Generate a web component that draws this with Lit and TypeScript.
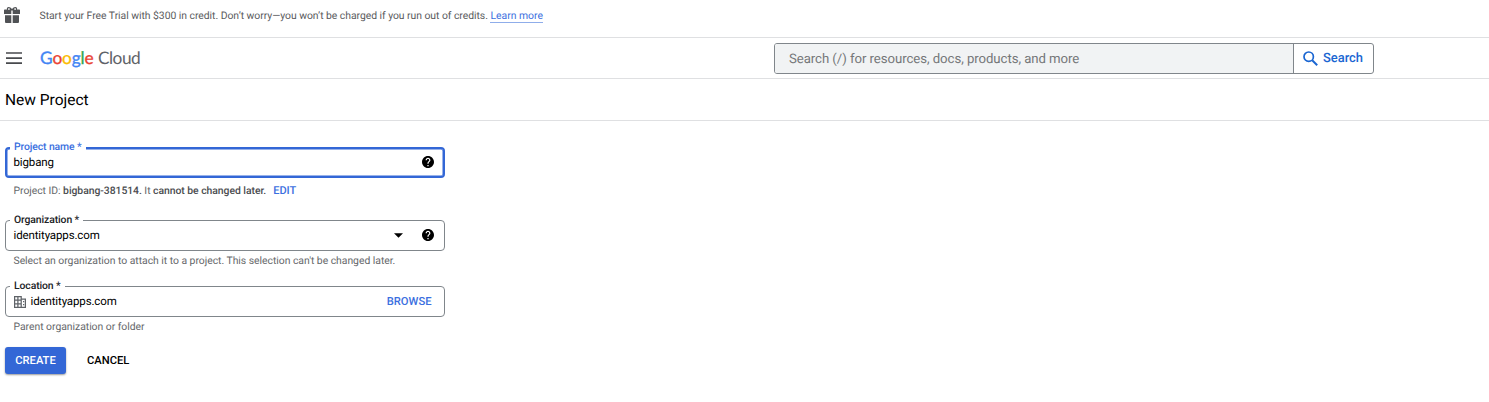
import { LitElement, html, css } from "lit";
import { customElement, property } from "lit/decorators.js";

const helpIcon = html`<svg class="help" viewBox="2 2 20 20" width="12" height="12"><path d="M12 2C6.48 2 2 6.48 2 12s4.48 10 10 10 10-4.48 10-10S17.52 2 12 2zm1 17h-2v-2h2v2zm2.07-7.75l-.9.92C13.45 12.9 13 13.5 13 15h-2v-.5c0-1.1.45-2.1 1.17-2.83l1.24-1.26c.37-.36.59-.86.59-1.41 0-1.1-.9-2-2-2s-2 .9-2 2H8c0-2.21 1.79-4 4-4s4 1.79 4 4c0 .88-.36 1.68-.93 2.25z"/></svg>`;

@customElement("form-field")
class FormField extends LitElement {
  @property() label = "";
  @property({ type: Boolean, reflect: true }) focused = false;
  static styles = css`
    :host { display: block; position: relative; box-sizing: border-box; width: 440px; height: 31px; border: 1px solid #80868b; border-radius: 4px; }
    :host([focused]) { border: 2px solid #3367d6; box-shadow: inset 0 0 0 .5px #3367d6; }
    .label { position: absolute; left: 4px; top: -8px; padding: 0 4px; background: #fff; font-size: 10.4px; line-height: 14px; font-weight: 500; letter-spacing: -.1px; white-space: nowrap; color: #202124; }
    :host([focused]) .label { left: 3px; top: -9px; color: #3b6fe0; }
    .body { display: flex; align-items: center; height: 29px; padding: 0 10px 0 7.500px; box-sizing: border-box; }
    :host([focused]) .body { height: 27px; padding: 0 9px 0 6.500px; }
  `;
  render() {
    return html`<span class="label">${this.label}</span><div class="body"><slot></slot></div>`;
  }
}

@customElement("app-root")
class AppRoot extends LitElement {
  static styles = css`
    :host { display: block; width: 100%; height: 402px; background: #fff; overflow: hidden; font-family: Roboto, sans-serif; color: #111; text-rendering: geometricPrecision; }
    svg { display: block; flex: none; }
    .banner { height: 37px; border-bottom: 1px solid #dfe0e2; display: flex; box-sizing: content-box; }
    .gift { margin: 7px 0 0 4px; }
    .promo { margin: 8px 0 0 19.500px; font-size: 10.4px; line-height: 15px; letter-spacing: -.04px; color: #5a5b5d; white-space: nowrap; }
    .promo a { color: #3b6fe0; border-bottom: 1px solid #8fadea; display: inline-block; line-height: 13px; letter-spacing: 0; }
    .top { height: 40px; border-bottom: 1px solid #dfe0e2; display: flex; align-items: center; }
    .menu { margin-left: 6px; }
    .logo { margin: 0 0 0 18px; font-family: Lato, sans-serif; font-size: 17.3px; line-height: 22px; display: flex; width: 101px; }
    .google { font-weight: 400; -webkit-text-stroke: .35px currentColor; letter-spacing: -.15px; width: 58px; }
    .b { color: #4285f4; } .r { color: #ea4335; } .y { color: #fbbc04; } .g { color: #34a853; }
    .cloud { color: #5f6368; letter-spacing: -.5px; }
    .search { margin-left: 633px; width: 600px; height: 31px; box-sizing: border-box; border: 1px solid #80868b; border-radius: 3px; display: flex; overflow: hidden; }
    .query { background: #f1f3f4; border-right: 1px solid #80868b; padding-left: 14px; line-height: 31px; font-size: 13.2px; letter-spacing: -.06px; color: #757779; box-sizing: content-box; width: 504px; }
    .go { display: flex; align-items: center; color: #1a66d2; font-size: 12.9px; font-weight: 500; padding-left: 9px; gap: 5px; line-height: 16px; }
    .go span { margin-top: 2px; }
    .title { height: 41px; border-bottom: 1px solid #dfe0e2; padding-left: 5px; font-size: 15.5px; line-height: 42px; font-weight: 400; margin: 0; color: #000; }
    main { padding: 26px 0 0 5px; }
    .value { font-size: 11.5px; letter-spacing: -.13px; line-height: 16px; flex: 1; margin-top: -2px; color: #000; }
    .hint { margin-left: 8.500px; font-size: 10.4px; line-height: 14px; letter-spacing: -.03px; color: #65676a; white-space: nowrap; }
    .hint b { font-weight: 500; color: #4b4d50; }
    .link { font-size: 11px; font-weight: 500; color: #3b6fe0; }
    .edit { margin-left: 4.500px; }
    .h1 { margin-top: 6px; margin-bottom: 22px; letter-spacing: -.04px; }
    .h2 { margin-top: 3px; margin-bottom: 18px; }
    .h3 { margin-top: 3px; margin-bottom: 13px; }
    .help { margin-top: -1px; }
    .arrow { margin-right: 19px; }
    .bld { margin-right: 5px; }
    .browse { margin-right: 2.500px; font-size: 11.2px; }
    .actions { display: flex; align-items: center; font-size: 11.2px; font-weight: 500; }
    .create { width: 61px; height: 27px; line-height: 27px; text-align: center; background: #3367d6; color: #fff; border-radius: 3px; box-shadow: 0 1px 2px rgba(0,0,0,.4); }
    .cancel { margin-left: 21px; color: #000; }
  `;
  render() {
    return html`
      <div class="banner">
        <svg class="gift" width="16" height="16" viewBox="0 0 16 16" fill="#505255"><path d="M0 3.2Q0 2.5.7 2.5H3Q2.3 0 4.8 0Q6.500 0 8 2Q9.500 0 11.200 0Q13.700 0 13 2.500h2.300q.7 0 .7.700V7H8.700V3.500H7.300V7H0zM4.900 1.200a.8.8 0 1 0 .01 0zM11.100 1.200a.8.8 0 1 0 .01 0zM1 8.200h6.300V16H2q-1 0-1-1zM8.700 8.200H15V15q0 1-1 1H8.700z" fill-rule="evenodd"/></svg>
        <div class="promo">Start your Free Trial with $300 in credit. Don’t worry—you won’t be charged if you run out of credits. <a>Learn more</a></div>
      </div>
      <div class="top">
        <svg class="menu" width="16" height="12" viewBox="0 0 16 12"><path d="M0 1h16M0 6.200h16M0 11.200h16" stroke="#484a4d" stroke-width="1.7"/></svg>
        <div class="logo"><span class="google"><span class="b">G</span><span class="r">o</span><span class="y">o</span><span class="b">g</span><span class="g">l</span><span class="r">e</span></span><span class="cloud">Cloud</span></div>
        <div class="search">
          <div class="query">Search (/) for resources, docs, products, and more</div>
          <div class="go"><svg width="15" height="15" viewBox="0 0 15 15" fill="none" stroke="#1a66d2"><circle cx="5.700" cy="5.700" r="4.700" stroke-width="1.700"/><path d="M9.200 9.200l5 5" stroke-width="2"/></svg><span>Search</span></div>
        </div>
      </div>
      <h1 class="title">New Project</h1>
      <main>
        <form-field label="Project name *" focused><span class="value">bigbang</span>${helpIcon}</form-field>
        <div class="hint h1">Project ID: <b>bigbang-381514.</b> It <b>cannot be changed later.</b> <span class="link edit">EDIT</span></div>
        <form-field label="Organization *"><span class="value">identityapps.com</span><svg class="arrow" width="9" height="5" viewBox="0 0 10 5"><path d="M0 0h10L5 5z"/></svg>${helpIcon}</form-field>
        <div class="hint h2">Select an organization to attach it to a project. This selection can't be changed later.</div>
        <form-field label="Location *"><svg class="bld" width="12" height="12" viewBox="0 0 12 12" fill="none" stroke="#5f6368"><path d="M.6.6h6.600v10.800H.6zM.6 4.200h6.600M.6 7.800h6.600M3.900.6v10.800M7.200 3h4.200v8.400H7.200M9 5.500h1.200M9 8.500h1.200" stroke-width="1.250"/></svg><span class="value">identityapps.com</span><span class="link browse">BROWSE</span></form-field>
        <div class="hint h3">Parent organization or folder</div>
        <div class="actions"><div class="create">CREATE</div><div class="cancel">CANCEL</div></div>
      </main>`;
  }
}
